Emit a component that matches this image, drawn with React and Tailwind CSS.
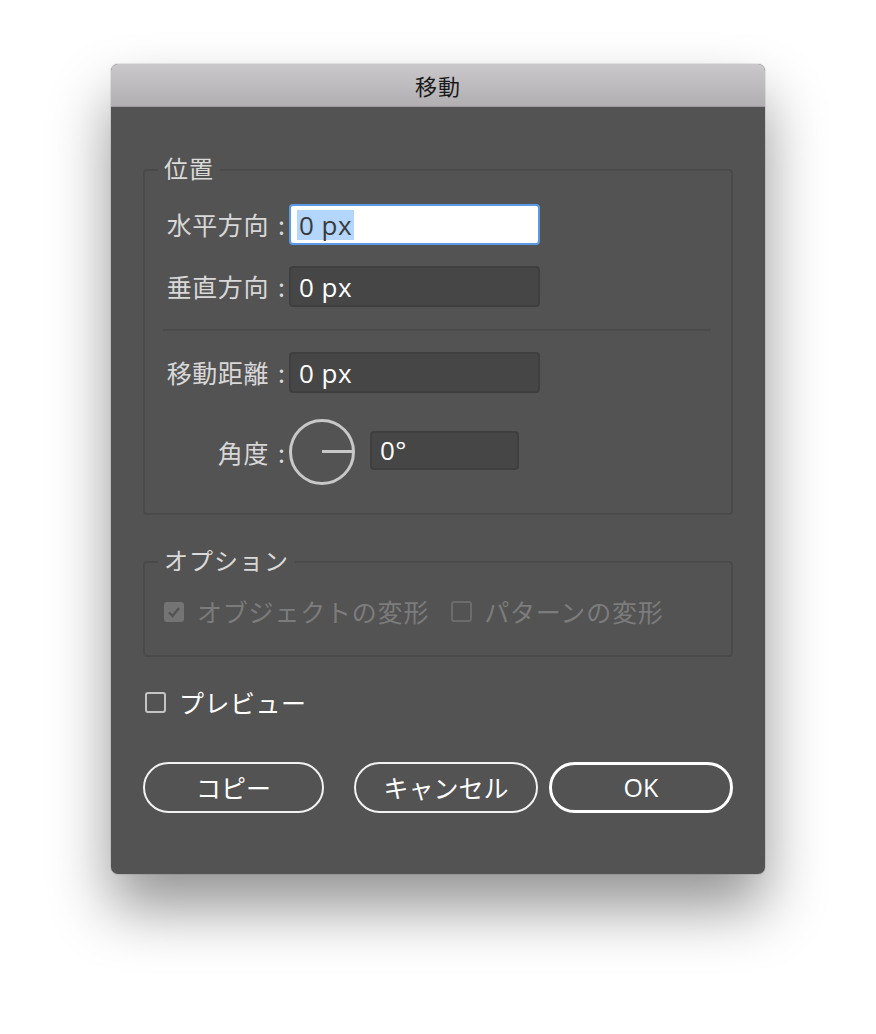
import React from "react";

const JP = { fontFamily: '"Noto Sans CJK JP", "Noto Sans", sans-serif' };
const LAT = { fontFamily: '"Open Sans", "Noto Sans", "Noto Sans CJK JP", sans-serif' };

function Label({ text, className = "" }) {
  return (
    <div
      className={"w-[122px] shrink-0 flex justify-end items-center text-[25px] leading-none text-[#d8d8d8] whitespace-nowrap " + className}
      style={JP}
    >
      <span className="tracking-[0.6px]">{text}</span>
      <span className="ml-[9px]">:</span>
    </div>
  );
}

function Field({ value, focused = false, w = "w-[251px]", h = "h-[41px]" }) {
  if (focused) {
    return (
      <div className={`${w} ${h} rounded-[4px] border-2 border-[#5b9ae6] bg-white flex items-center pl-[6px]`}>
        <span className="bg-[#b4d5fc] text-[#3a3a3a] text-[26px] leading-[30px] px-[2px] tracking-[0.5px]" style={LAT}>
          {value}
        </span>
      </div>
    );
  }
  return (
    <div className={`${w} ${h} rounded-[4px] border-2 border-[#3f3f3f] bg-[#464646] flex items-center pl-[8px]`}>
      <span className="text-white text-[26px] leading-none tracking-[0.5px]" style={LAT}>
        {value}
      </span>
    </div>
  );
}

function Group({ title, className = "", children }) {
  return (
    <div className={"relative rounded-[4px] border-2 border-[#4a4a4a] " + className}>
      <div
        className="absolute left-[13px] top-[-18px] px-[6px] bg-[#535353] text-[24px] leading-[30px] text-[#dadada] tracking-[1px]"
        style={JP}
      >
        {title}
      </div>
      {children}
    </div>
  );
}

function Button({ children, primary = false }) {
  return (
    <div
      className={
        "w-[184px] h-[51px] rounded-full flex items-center justify-center text-white text-[25px] " +
        (primary ? "border-[3px] border-white" : "border-2 border-[#f2f2f2]")
      }
      style={JP}
    >
      {children}
    </div>
  );
}

export default function App() {
  return (
    <div className="w-[876px] h-[1034px] bg-white flex justify-center pt-[64px]">
      <div className="w-[654px] h-[810px] rounded-[7px] overflow-hidden bg-[#535353] shadow-[0_34px_60px_rgba(0,0,0,0.42),0_0_0_1px_rgba(0,0,0,0.08)] flex flex-col">
        {/* Title bar */}
        <div className="h-[43px] shrink-0 bg-gradient-to-b from-[#cac8ca] to-[#b1afb1] border-b border-[#9d9b9d] flex items-center justify-center">
          <span className="text-[22px] text-[#1a1a1a] tracking-[1px]" style={JP}>
            移動
          </span>
        </div>

        <div className="px-[32px] pt-[62px] flex flex-col">
          {/* Position group */}
          <Group title="位置" className="h-[346px] pt-[33px] px-[18px]">
            <div className="flex items-center gap-[4px]">
              <Label text="水平方向" />
              <Field value="0 px" focused />
            </div>
            <div className="flex items-center gap-[4px] mt-[21px]">
              <Label text="垂直方向" />
              <Field value="0 px" />
            </div>
            <div className="h-[2px] bg-[#4a4a4a] mt-[22px] mr-[2px]" />
            <div className="flex items-center gap-[4px] mt-[21px]">
              <Label text="移動距離" />
              <Field value="0 px" />
            </div>
            <div className="flex items-center mt-[25px]">
              <Label text="角度" />
              <svg width="68" height="68" viewBox="0 0 68 68" className="ml-[3px]">
                <circle cx="34" cy="34" r="31.5" fill="none" stroke="#c8c8c8" strokeWidth="3" />
                <line x1="34" y1="33.5" x2="64" y2="33.5" stroke="#c8c8c8" strokeWidth="3" />
              </svg>
              <div className="ml-[14px] mb-[4px]">
                <Field value="0°" w="w-[149px]" h="h-[39px]" />
              </div>
            </div>
          </Group>

          {/* Options group */}
          <Group title="オプション" className="mt-[46px] h-[96px] pt-[36px] px-[19px]">
            <div className="flex items-center text-[25px] leading-none text-[#7c7c7c]" style={JP}>
              <div className="w-[20px] h-[20px] rounded-[3px] bg-[#747474] flex items-center justify-center">
                <svg width="14" height="14" viewBox="0 0 14 14">
                  <path d="M2 7.5 L5.5 11 L12 3" fill="none" stroke="#545454" strokeWidth="2.4" />
                </svg>
              </div>
              <span className="ml-[13px] tracking-[0.8px]">オブジェクトの変形</span>
              <div className="ml-[22px] w-[21px] h-[21px] rounded-[3px] border-2 border-[#6c6c6c]" />
              <span className="ml-[12px] tracking-[0.8px]">パターンの変形</span>
            </div>
          </Group>

          {/* Preview */}
          <div className="flex items-center mt-[28px] ml-[2px]">
            <div className="w-[21px] h-[21px] rounded-[3px] border-2 border-[#c4c4c4]" />
            <span className="ml-[13px] text-[25px] leading-[34px] text-white tracking-[0.5px]" style={JP}>
              プレビュー
            </span>
          </div>

          {/* Buttons */}
          <div className="flex items-center mt-[43px]">
            <Button>コピー</Button>
            <div className="ml-[30px]">
              <Button>キャンセル</Button>
            </div>
            <div className="ml-[11px]">
              <Button primary>
                <span style={LAT} className="text-[25px]">OK</span>
              </Button>
            </div>
          </div>
        </div>
      </div>
    </div>
  );
}
